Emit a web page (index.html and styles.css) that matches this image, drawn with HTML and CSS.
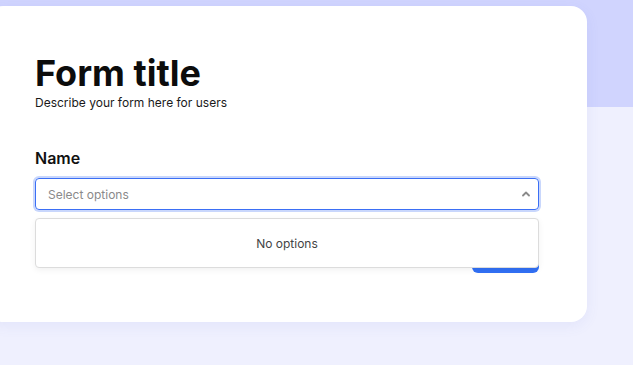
FILE: index.html
```html
<!DOCTYPE html>
<html lang="en">

<head>
  <meta charset="UTF-8">
  <meta name="viewport" content="width=device-width, initial-scale=1.0">
  <title>Form</title>
  <link rel="stylesheet" href="styles.css">
</head>

<body>
  <div class="card">
    <h1 class="title">Form title</h1>
    <p class="description">Describe your form here for users</p>

    <div class="field">
      <label class="label">Name</label>
      <div class="select-wrap">
        <div class="select">
          <span class="placeholder">Select options</span>
          <svg class="chevron" width="8" height="6" viewBox="0 0 8 6">
            <path d="M1 4.5 L4 1.5 L7 4.5" fill="none" stroke="#8a8a8a" stroke-width="1.8" stroke-linecap="round" stroke-linejoin="round"/>
          </svg>
        </div>
        <div class="menu">No options</div>
      </div>
    </div>

    <div class="actions">
      <button class="submit">Submit</button>
    </div>
  </div>
</body>

</html>
```

FILE: styles.css
```css
body {
  margin: 0;
  min-height: 365px;
  font-family: Inter, "Noto Sans", sans-serif;
  color: #111;
  background: linear-gradient(#d0d4fe 0, #d0d4fe 107px, #eff0fe 107px);
}

.card {
  width: 504px;
  margin: 6px 0 0 -13px;
  padding: 46px 48px 49px 48px;
  background-color: #fff;
  border-radius: 16px;
  box-shadow: 0 4px 14px rgba(90, 100, 200, 0.08);
}

.title {
  margin: 0;
  font-size: 36px;
  line-height: 43px;
  font-weight: 700;
  color: #0c0c0c;
}

.description {
  margin: 0;
  font-size: 12px;
  line-height: 15px;
  color: #1a1a1a;
}

.field {
  margin-top: 38px;
}

.label {
  display: block;
  font-size: 16px;
  line-height: 20px;
  font-weight: 600;
  margin-bottom: 10px;
}

.select-wrap {
  position: relative;
}

.select {
  height: 32px;
  box-sizing: border-box;
  display: flex;
  align-items: center;
  justify-content: space-between;
  padding: 0 8px 0 12px;
  border: 1px solid #3b6ff5;
  border-radius: 4px;
  box-shadow: 0 0 0 2px #c9d7fc;
}

.placeholder {
  font-size: 12px;
  color: #8a8a8a;
}

.menu {
  position: absolute;
  top: 40px;
  left: 0;
  right: 0;
  height: 50px;
  box-sizing: border-box;
  display: flex;
  align-items: center;
  justify-content: center;
  font-size: 12px;
  color: #444;
  background-color: #fff;
  border: 1px solid #dcdcdc;
  border-radius: 4px;
  box-shadow: 0 2px 6px rgba(0, 0, 0, 0.06);
}

.actions {
  display: flex;
  justify-content: flex-end;
  margin-top: 31px;
}

.submit {
  width: 67px;
  height: 32px;
  border: none;
  border-radius: 6px;
  background-color: #3170f5;
  color: #fff;
  font-family: inherit;
  font-size: 13px;
}
```
